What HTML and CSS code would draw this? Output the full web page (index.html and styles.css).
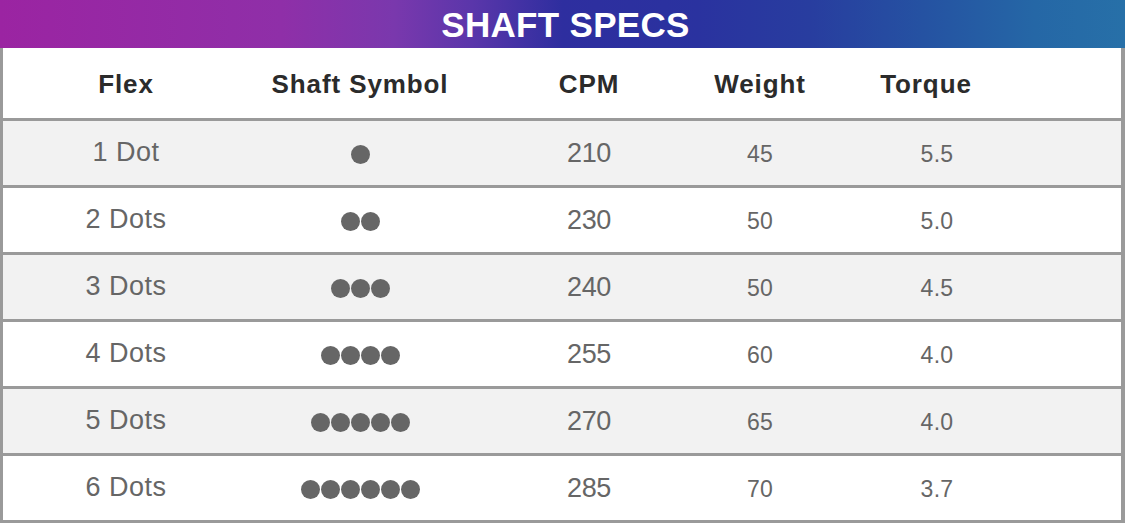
FILE: index.html
```html
<!DOCTYPE html>
<html>
<head>
<meta charset="utf-8">
<link rel="stylesheet" href="styles.css">
</head>
<body>
<div class="specs">
  <div class="title">SHAFT SPECS</div>
  <div class="table">
    <div class="row head">
      <div class="cell">Flex</div>
      <div class="cell">Shaft Symbol</div>
      <div class="cell">CPM</div>
      <div class="cell">Weight</div>
      <div class="cell">Torque</div>
      <div class="cell"></div>
    </div>
    <div class="row alt">
      <div class="cell flex">1 Dot</div>
      <div class="cell"><span class="dots"><i></i></span></div>
      <div class="cell cpm">210</div>
      <div class="cell num">45</div>
      <div class="cell num tq">5.5</div>
      <div class="cell"></div>
    </div>
    <div class="row">
      <div class="cell flex">2 Dots</div>
      <div class="cell"><span class="dots"><i></i><i></i></span></div>
      <div class="cell cpm">230</div>
      <div class="cell num">50</div>
      <div class="cell num tq">5.0</div>
      <div class="cell"></div>
    </div>
    <div class="row alt">
      <div class="cell flex">3 Dots</div>
      <div class="cell"><span class="dots"><i></i><i></i><i></i></span></div>
      <div class="cell cpm">240</div>
      <div class="cell num">50</div>
      <div class="cell num tq">4.5</div>
      <div class="cell"></div>
    </div>
    <div class="row">
      <div class="cell flex">4 Dots</div>
      <div class="cell"><span class="dots"><i></i><i></i><i></i><i></i></span></div>
      <div class="cell cpm">255</div>
      <div class="cell num">60</div>
      <div class="cell num tq">4.0</div>
      <div class="cell"></div>
    </div>
    <div class="row alt">
      <div class="cell flex">5 Dots</div>
      <div class="cell"><span class="dots"><i></i><i></i><i></i><i></i><i></i></span></div>
      <div class="cell cpm">270</div>
      <div class="cell num">65</div>
      <div class="cell num tq">4.0</div>
      <div class="cell"></div>
    </div>
    <div class="row last">
      <div class="cell flex">6 Dots</div>
      <div class="cell"><span class="dots"><i></i><i></i><i></i><i></i><i></i><i></i></span></div>
      <div class="cell cpm">285</div>
      <div class="cell num">70</div>
      <div class="cell num tq">3.7</div>
      <div class="cell"></div>
    </div>
  </div>
</div>
</body>
</html>
```
FILE: styles.css
```css
* { box-sizing: border-box; }
html, body { margin: 0; padding: 0; background: #fff; }
body { width: 1125px; height: 524px; overflow: hidden; font-family: "Liberation Sans", Arial, sans-serif; }

.specs { display: flex; flex-direction: column; width: 1125px; }

.title {
  height: 48px;
  display: flex;
  align-items: center;
  justify-content: center;
  color: #fff;
  font-weight: 700;
  font-size: 35px;
  letter-spacing: 0.3px;
  padding-top: 2px;
  padding-left: 6px;
  background: linear-gradient(90deg, #9b24a2 0%, #8f2fa8 25%, #7a38ad 35%, #5a36aa 42%, #2e2e9f 50%, #2a329f 62%, #283d9f 72%, #2552a2 82%, #2567a6 92%, #2770a8 100%);
}

.table {
  border-left: 3px solid #9a9a9a;
  border-right: 4px solid #9a9a9a;
  border-bottom: 3px solid #9a9a9a;
}

.row {
  display: grid;
  grid-template-columns: 246px 222px 236px 106px 228px 1fr;
  height: 64px;
  align-items: center;
  border-top: 3px solid #9a9a9a;
  background: #fff;
}
.row.head { height: 70px; border-top: none; }
.row.alt { background: #f2f2f2; }
.row + .row { height: 67px; }
.row.head + .row { height: 67px; }

.cell { text-align: center; color: #666; }

.head .cell {
  color: #2b2b2b;
  font-weight: 700;
  font-size: 26px;
  letter-spacing: 0.9px;
  padding-top: 3px;
}
.head .cell:nth-child(5) { padding-right: 2px; }

.flex { font-size: 27px; letter-spacing: 0.5px; padding-bottom: 2px; }
.cpm { font-size: 27px; letter-spacing: -0.3px; }
.num { font-size: 23px; letter-spacing: 0.3px; padding-top: 2px; }
.tq { padding-left: 20px; }

.dots { display: inline-flex; gap: 1px; vertical-align: middle; padding-top: 2px; }
.dots i { display: block; width: 19px; height: 19px; border-radius: 50%; background: #666; }
```
